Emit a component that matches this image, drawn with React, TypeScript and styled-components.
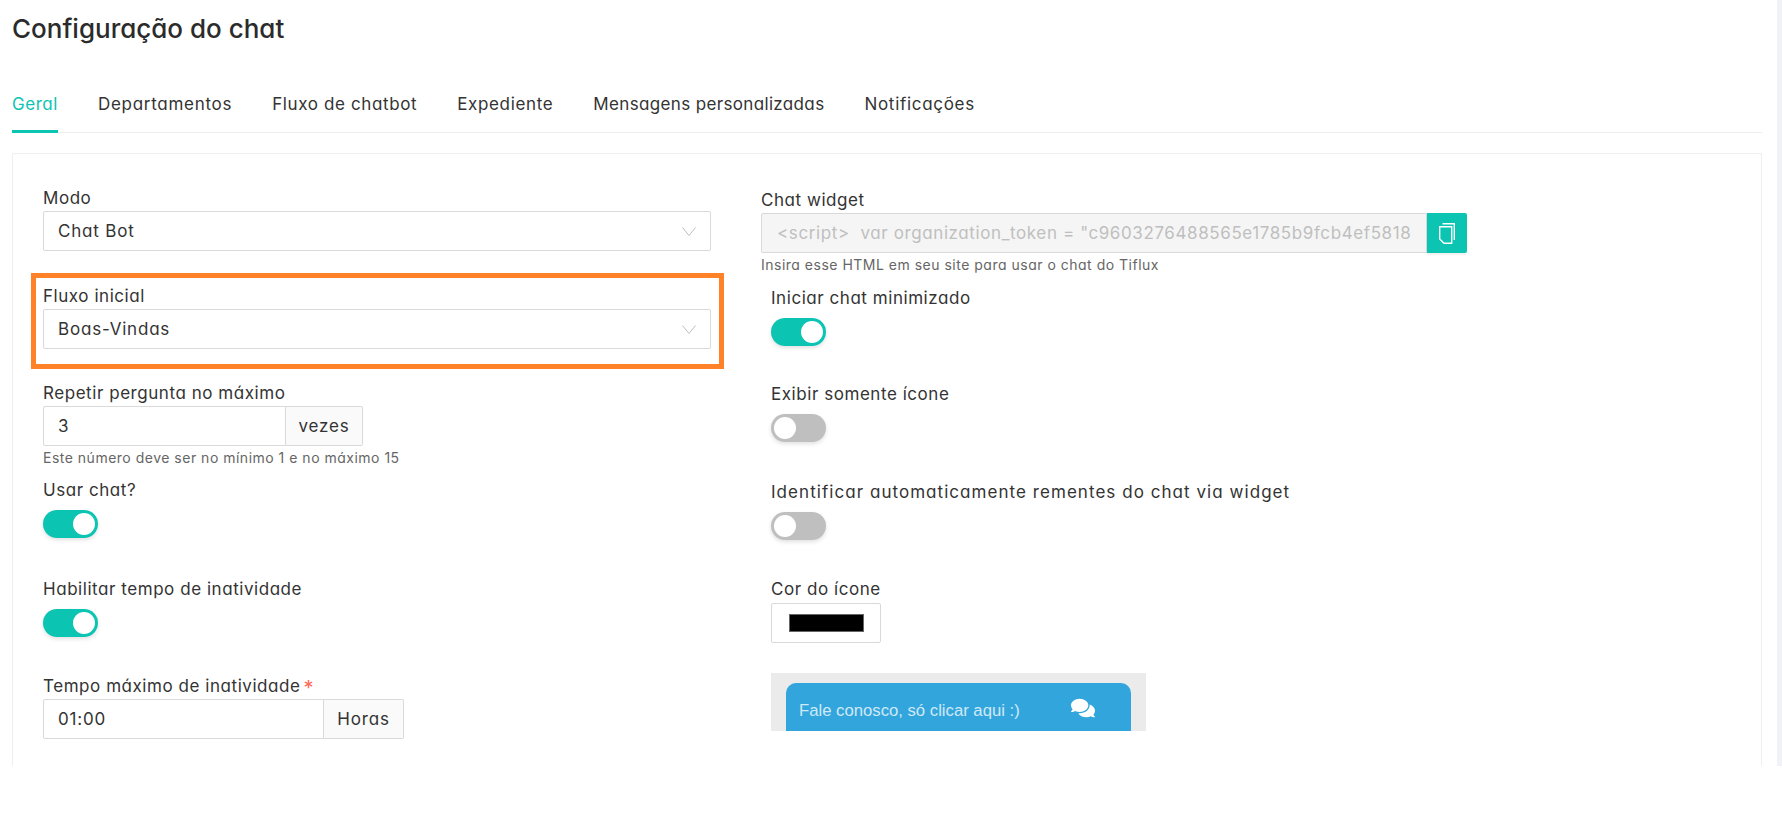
import React from "react";
import styled, { createGlobalStyle } from "styled-components";
import { FaComments } from "react-icons/fa";

const GlobalStyle = createGlobalStyle`
  html, body {
    margin: 0;
    padding: 0;
    background: #fff;
    font-family: "Inter", "Liberation Sans", sans-serif;
    font-feature-settings: "cv11" 1;
    color: #333;
  }
`;

const Page = styled.div`
  display: flex;
  width: 1782px;
  height: 766px;
  overflow: hidden;
`;

const Main = styled.main`
  width: 1750px;
  margin-left: 12px;
  display: flex;
  flex-direction: column;
`;

const Title = styled.h1`
  margin: 13px 0 0;
  height: 32px;
  line-height: 32px;
  font-size: 26px;
  font-weight: 500;
  color: #2b2b2b;
`;

const Tabs = styled.nav`
  display: flex;
  gap: 40px;
  height: 44px;
  margin: 43px 0 20px;
  box-sizing: content-box;
  border-bottom: 1px solid #eee;
`;

const Tab = styled.div<{ $active?: boolean; $tracking: number }>`
  height: 45px;
  padding-top: 1px;
  box-sizing: border-box;
  line-height: 30px;
  font-size: 17px;
  letter-spacing: ${(p) => p.$tracking}px;
  color: ${(p) => (p.$active ? "#0cc4b2" : "#333")};
  border-bottom: 3px solid ${(p) => (p.$active ? "#0cc4b2" : "transparent")};
`;

const Card = styled.section`
  flex: 1;
  border: 1px solid #eee;
  border-bottom: 0;
  border-radius: 2px 2px 0 0;
  padding: 31px 30px 0;
  display: grid;
  grid-template-columns: 668px 1fr;
  column-gap: 50px;
`;

const Column = styled.div<{ $right?: boolean }>`
  display: flex;
  flex-direction: column;
  padding-top: ${(p) => (p.$right ? "2px" : "0")};
`;

const Field = styled.div<{ $after?: number; $inset?: number }>`
  display: flex;
  flex-direction: column;
  margin-bottom: ${(p) => p.$after ?? 0}px;
  margin-left: ${(p) => p.$inset ?? 0}px;
`;

const Highlighted = styled(Field)`
  position: relative;
  &::after {
    content: "";
    position: absolute;
    top: -10px;
    left: -12px;
    width: 693px;
    height: 96px;
    box-sizing: border-box;
    border: 5px solid #ff8128;
    pointer-events: none;
  }
`;

const Label = styled.label<{ $tracking?: number }>`
  display: block;
  height: 26px;
  line-height: 26px;
  font-size: 17px;
  letter-spacing: ${(p) => p.$tracking ?? 0.55}px;
  white-space: nowrap;
  color: #333;
`;

const Required = styled.span`
  color: #ff6a55;
  margin-left: 3px;
  font-size: 20px;
  line-height: 20px;
  vertical-align: -3px;
`;

const Control = styled.div`
  height: 40px;
  box-sizing: border-box;
  border: 1px solid #d9d9d9;
  border-radius: 2px;
  background: #fff;
  display: flex;
  align-items: center;
  font-size: 17px;
  letter-spacing: 0.8px;
  color: #333;
`;

const Select = styled(Control)`
  width: 668px;
  padding: 0 14px;
  justify-content: space-between;
`;

const Chevron = styled.svg`
  width: 14px;
  height: 9px;
  stroke: #bfbfbf;
  fill: none;
`;

const InputGroup = styled.div<{ $width: number }>`
  display: flex;
  width: ${(p) => p.$width}px;
`;

const GroupInput = styled(Control)`
  flex: 1;
  padding: 0 14px;
  border-radius: 2px 0 0 2px;
`;

const Addon = styled(Control)<{ $width: number }>`
  width: ${(p) => p.$width}px;
  justify-content: center;
  background: #fafafa;
  border-left: 0;
  border-radius: 0 2px 2px 0;
`;

const Help = styled.div`
  height: 24px;
  line-height: 24px;
  font-size: 14px;
  letter-spacing: 0.5px;
  color: #666;
`;

const Switch = styled.div<{ $on?: boolean }>`
  width: 55px;
  height: 28px;
  margin-top: 7px;
  border-radius: 14px;
  position: relative;
  background: ${(p) => (p.$on ? "#0cc4b2" : "#bfbfbf")};
  box-shadow: 0 2px 4px rgba(0, 0, 0, 0.12);
  &::after {
    content: "";
    position: absolute;
    top: 3px;
    left: ${(p) => (p.$on ? "30px" : "3px")};
    width: 22px;
    height: 22px;
    border-radius: 50%;
    background: #fff;
  }
`;

const WidgetRow = styled.div`
  display: flex;
  width: 706px;
`;

const WidgetInput = styled(Control)`
  flex: 1;
  min-width: 0;
  padding: 0 15px;
  background: #f5f5f5;
  color: #bfbfbf;
  letter-spacing: 0.6px;
  white-space: pre;
  overflow: hidden;
  border-radius: 2px 0 0 2px;
`;

const CopyButton = styled.button`
  width: 40px;
  height: 40px;
  padding: 0;
  border: 0;
  border-radius: 0 2px 2px 0;
  background: #0cc4b2;
  display: flex;
  align-items: center;
  justify-content: center;
  box-shadow: 0 2px 2px rgba(0, 0, 0, 0.06);
`;

const ColorBox = styled.div`
  width: 110px;
  height: 40px;
  margin-top: 1px;
  box-sizing: border-box;
  border: 1px solid #d9d9d9;
  border-radius: 2px;
  display: flex;
  align-items: center;
  justify-content: center;
`;

const Swatch = styled.div`
  width: 75px;
  height: 18px;
  box-sizing: border-box;
  border: 1px solid #666;
  background: #000;
`;

const Preview = styled.div`
  width: 375px;
  height: 58px;
  margin: 30px 0 0 10px;
  padding: 10px 15px 0;
  box-sizing: border-box;
  background: #ebebeb;
  overflow: hidden;
`;

const PreviewBar = styled.div`
  height: 60px;
  padding: 0 36px 14px 13px;
  border-radius: 10px 10px 0 0;
  background: #33a5dd;
  display: flex;
  align-items: flex-start;
  justify-content: space-between;
  font-family: "Liberation Sans", sans-serif;
  font-size: 16.7px;
  line-height: 56px;
  color: #cfe9f7;
`;

const PreviewIcon = styled(FaComments)`
  width: 24px;
  height: 24px;
  margin-top: 13px;
  color: #fff;
`;

const Scrollbar = styled.div`
  width: 5px;
  margin-left: 15px;
  background: #f0f2f7;
`;

const tabs = [
  { name: "Geral", tracking: 0.54 },
  { name: "Departamentos", tracking: 0.72 },
  { name: "Fluxo de chatbot", tracking: 0.62 },
  { name: "Expediente", tracking: 0.65 },
  { name: "Mensagens personalizadas", tracking: 0.35 },
  { name: "Notificações", tracking: 0.7 },
];

const DownIcon = () => (
  <Chevron viewBox="0 0 14 9">
    <path d="M.5.5L7 8.5 13.5.5" />
  </Chevron>
);

export default function App() {
  return (
    <>
      <GlobalStyle />
      <Page>
        <Main>
          <Title>Configuração do chat</Title>
          <Tabs>
            {tabs.map((t, i) => (
              <Tab key={t.name} $active={i === 0} $tracking={t.tracking}>
                {t.name}
              </Tab>
            ))}
          </Tabs>
          <Card>
            <Column>
              <Field $after={32}>
                <Label>Modo</Label>
                <Select>
                  Chat Bot
                  <DownIcon />
                </Select>
              </Field>
              <Highlighted $after={31}>
                <Label>Fluxo inicial</Label>
                <Select>
                  Boas-Vindas
                  <DownIcon />
                </Select>
              </Highlighted>
              <Field $after={7}>
                <Label>Repetir pergunta no máximo</Label>
                <InputGroup $width={320}>
                  <GroupInput>3</GroupInput>
                  <Addon $width={77}>vezes</Addon>
                </InputGroup>
                <Help>Este número deve ser no mínimo 1 e no máximo 15</Help>
              </Field>
              <Field $after={38}>
                <Label>Usar chat?</Label>
                <Switch $on />
              </Field>
              <Field $after={36}>
                <Label>Habilitar tempo de inatividade</Label>
                <Switch $on />
              </Field>
              <Field>
                <Label>
                  Tempo máximo de inatividade<Required>*</Required>
                </Label>
                <InputGroup $width={361}>
                  <GroupInput>01:00</GroupInput>
                  <Addon $width={80}>Horas</Addon>
                </InputGroup>
              </Field>
            </Column>
            <Column $right>
              <Field $after={8}>
                <Label>Chat widget</Label>
                <WidgetRow>
                  <WidgetInput>{'<script>  var organization_token = "c9603276488565e1785b9fcb4ef5818'}</WidgetInput>
                  <CopyButton aria-label="Copiar">
                    <svg width="16" height="21" viewBox="0 0 16 21" fill="none" stroke="#fff" strokeWidth="1.4">
                      <path d="M3.5.7h11.8V17" />
                      <path d="M.7 3.7h12v16.6H5L.7 16z" fill="#0cc4b2" />
                    </svg>
                  </CopyButton>
                </WidgetRow>
                <Help>Insira esse HTML em seu site para usar o chat do Tiflux</Help>
              </Field>
              <Field $inset={10} $after={35}>
                <Label>Iniciar chat minimizado</Label>
                <Switch $on />
              </Field>
              <Field $inset={10} $after={37}>
                <Label>Exibir somente ícone</Label>
                <Switch />
              </Field>
              <Field $inset={10} $after={36}>
                <Label $tracking={1.05}>Identificar automaticamente rementes do chat via widget</Label>
                <Switch />
              </Field>
              <Field $inset={10}>
                <Label>Cor do ícone</Label>
                <ColorBox>
                  <Swatch />
                </ColorBox>
              </Field>
              <Preview>
                <PreviewBar>
                  Fale conosco, só clicar aqui :)
                  <PreviewIcon />
                </PreviewBar>
              </Preview>
            </Column>
          </Card>
        </Main>
        <Scrollbar />
      </Page>
    </>
  );
}
